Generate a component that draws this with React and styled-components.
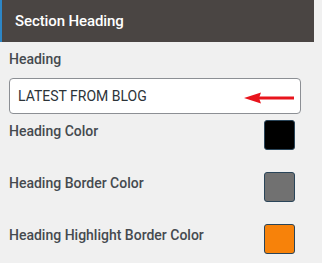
import React from "react";
import styled, { createGlobalStyle } from "styled-components";

const Global = createGlobalStyle`
  html, body { margin: 0; padding: 0; background: #f0f0f0; }
  body { font-family: Roboto, "Noto Sans", "Liberation Sans", sans-serif; }
`;

const Panel = styled.div`
  width: 314px;
  background: #f0f0f0;
`;

const Header = styled.div`
  height: 42px;
  box-sizing: border-box;
  background: #4a4543;
  border-left: 2px solid #2d86c6;
  padding-left: 13px;
  display: flex;
  align-items: center;
  color: #ffffff;
  font-size: 15px;
  font-weight: 500;
  letter-spacing: -0.1px;
`;

const Body = styled.div`
  padding: 9px 13px 0 9px;
  display: flex;
  flex-direction: column;
`;

const Label = styled.div`
  font-size: 14px;
  line-height: 16px;
  font-weight: 500;
  color: #454a4f;
  padding-top: ${(p) => p.$pt || 0}px;
`;

const InputBox = styled.div`
  margin-top: 11px;
  height: 36px;
  box-sizing: border-box;
  border: 1px solid #8c8f94;
  border-radius: 4px;
  background: #ffffff;
  display: flex;
  align-items: center;
  justify-content: space-between;
  padding: 0 6px 0 8px;
  font-size: 14px;
  color: #2c3338;
`;

const ArrowWrap = styled.span`
  display: block;
  margin-top: 3px;
`;

const Rows = styled.div`
  margin-top: 6px;
  display: flex;
  flex-direction: column;
  gap: 22px;
`;

const Row = styled.div`
  display: flex;
  justify-content: space-between;
  align-items: flex-start;
  padding-right: 6px;
`;

const Swatch = styled.div`
  width: 31px;
  height: 30px;
  box-sizing: border-box;
  border-radius: 3px;
  border: 1px solid #2a4559;
  background: ${(p) => p.$color};
`;

const Arrow = () => (
  <ArrowWrap>
    <svg width="50" height="14" viewBox="0 0 50 14" style={{ display: "block" }}>
      <path d="M15 7 H50" stroke="#e8141c" strokeWidth="3" />
      <path d="M0 7 L17 1.5 L15 7 L17 12.5 Z" fill="#e8141c" />
    </svg>
  </ArrowWrap>
);

const rows = [
  { label: "Heading Color", color: "#000000" },
  { label: "Heading Border Color", color: "#717171" },
  { label: "Heading Highlight Border Color", color: "#f7820a" },
];

export default function App() {
  return (
    <>
      <Global />
      <Panel>
        <Header>Section Heading</Header>
        <Body>
          <Label>Heading</Label>
          <InputBox>
            <span>LATEST FROM BLOG</span>
            <Arrow />
          </InputBox>
          <Rows>
            {rows.map((r) => (
              <Row key={r.label}>
                <Label $pt={3}>{r.label}</Label>
                <Swatch $color={r.color} />
              </Row>
            ))}
          </Rows>
        </Body>
      </Panel>
    </>
  );
}
